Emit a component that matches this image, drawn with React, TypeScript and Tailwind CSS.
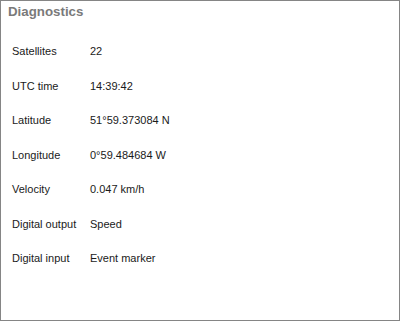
const rows: [string, string][] = [
  ["Satellites", "22"],
  ["UTC time", "14:39:42"],
  ["Latitude", "51°59.373084 N"],
  ["Longitude", "0°59.484684 W"],
  ["Velocity", "0.047 km/h"],
  ["Digital output", "Speed"],
  ["Digital input", "Event marker"],
];

export default function App() {
  return (
    <div className="w-[400px] h-[321px] bg-white border border-[#858585] font-['Liberation_Sans',Arial,sans-serif] overflow-hidden">
      <h1 className="pl-[7px] pt-[3px] text-[13.3px] font-bold text-[#7a7a7a] leading-[16px]">
        Diagnostics
      </h1>
      <div className="mt-[14px] pl-[11px]">
        {rows.map(([label, value]) => (
          <div key={label} className="flex items-center h-[34.5px] text-[11px] text-[#1a1a1a]">
            <span className="w-[78px]">{label}</span>
            <span>{value}</span>
          </div>
        ))}
      </div>
    </div>
  );
}
